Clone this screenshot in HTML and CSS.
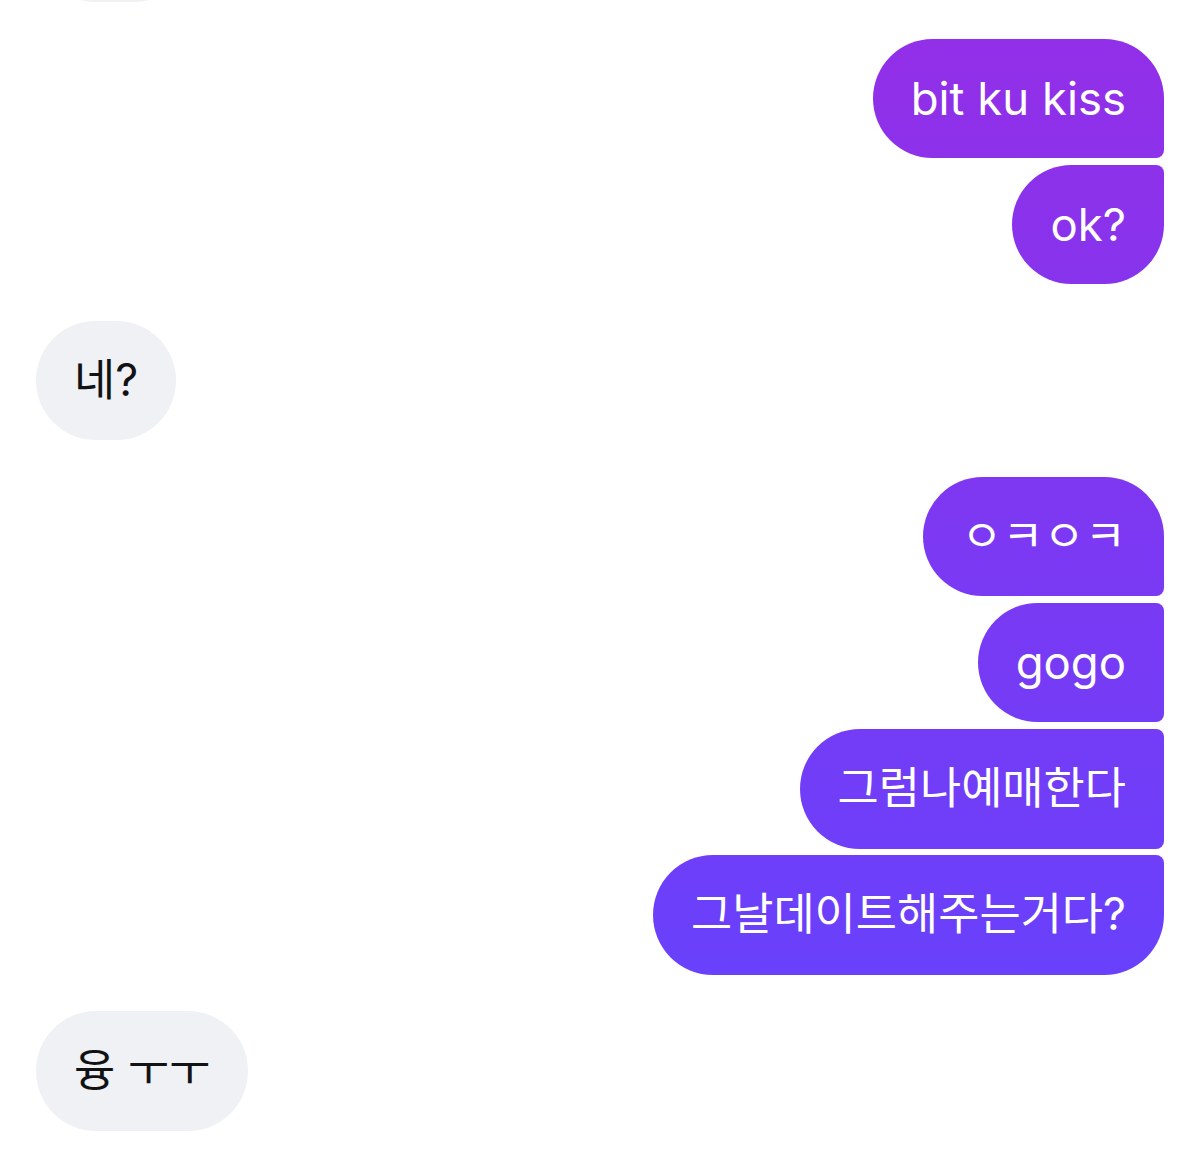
FILE: index.html
```html
<!DOCTYPE html>
<html lang="ko">

<head>
    <title>메시지</title>
    <link rel="stylesheet" href="styles.css">
</head>

<body>
    <div class="thread">
        <div class="group theirs">
            <div class="bubble ko">응응</div>
        </div>

        <div class="group mine">
            <div class="bubble first">bit ku kiss</div>
            <div class="bubble last">ok?</div>
        </div>

        <div class="group theirs">
            <div class="bubble ko">네?</div>
        </div>

        <div class="group mine">
            <div class="bubble first ko">ㅇㅋㅇㅋ</div>
            <div class="bubble middle">gogo</div>
            <div class="bubble middle ko">그럼나예매한다</div>
            <div class="bubble last ko">그날데이트해주는거다?</div>
        </div>

        <div class="group theirs">
            <div class="bubble ko">융 ㅜㅜ</div>
        </div>
    </div>
</body>

</html>
```

FILE: styles.css
```css
html,
body {
    margin: 0;
    padding: 0;
    background: #ffffff;
    overflow: hidden;
}

body {
    font-family: Inter, "Noto Sans CJK KR", sans-serif;
    font-size: 45.5px;
}

.thread {
    display: flex;
    flex-direction: column;
    gap: 36.5px;
    padding: 0 24px 0 36px;
    margin-top: -117.5px;
}

.group {
    display: flex;
    flex-direction: column;
    gap: 6.7px;
}

.mine {
    align-items: flex-end;
}

.theirs {
    align-items: flex-start;
}

.bubble {
    box-sizing: border-box;
    height: 119.5px;
    line-height: 55px;
    padding: 32px 38px;
    border-radius: 60px;
    white-space: nowrap;
}

/* hangul runs a bit wider than the latin text */
.ko {
    font-size: 44.8px;
}

.theirs .bubble {
    background-color: #eff1f4;
    color: #111214;
}

.mine .bubble {
    color: #ffffff;
    background-image: linear-gradient(to bottom, #942ee7 0px, #6144ff 1154px);
    background-attachment: fixed;
}

.mine .first {
    border-radius: 60px 60px 8px 60px;
}

.mine .middle {
    border-radius: 60px 8px 8px 60px;
}

.mine .last {
    border-radius: 60px 8px 60px 60px;
}
```
